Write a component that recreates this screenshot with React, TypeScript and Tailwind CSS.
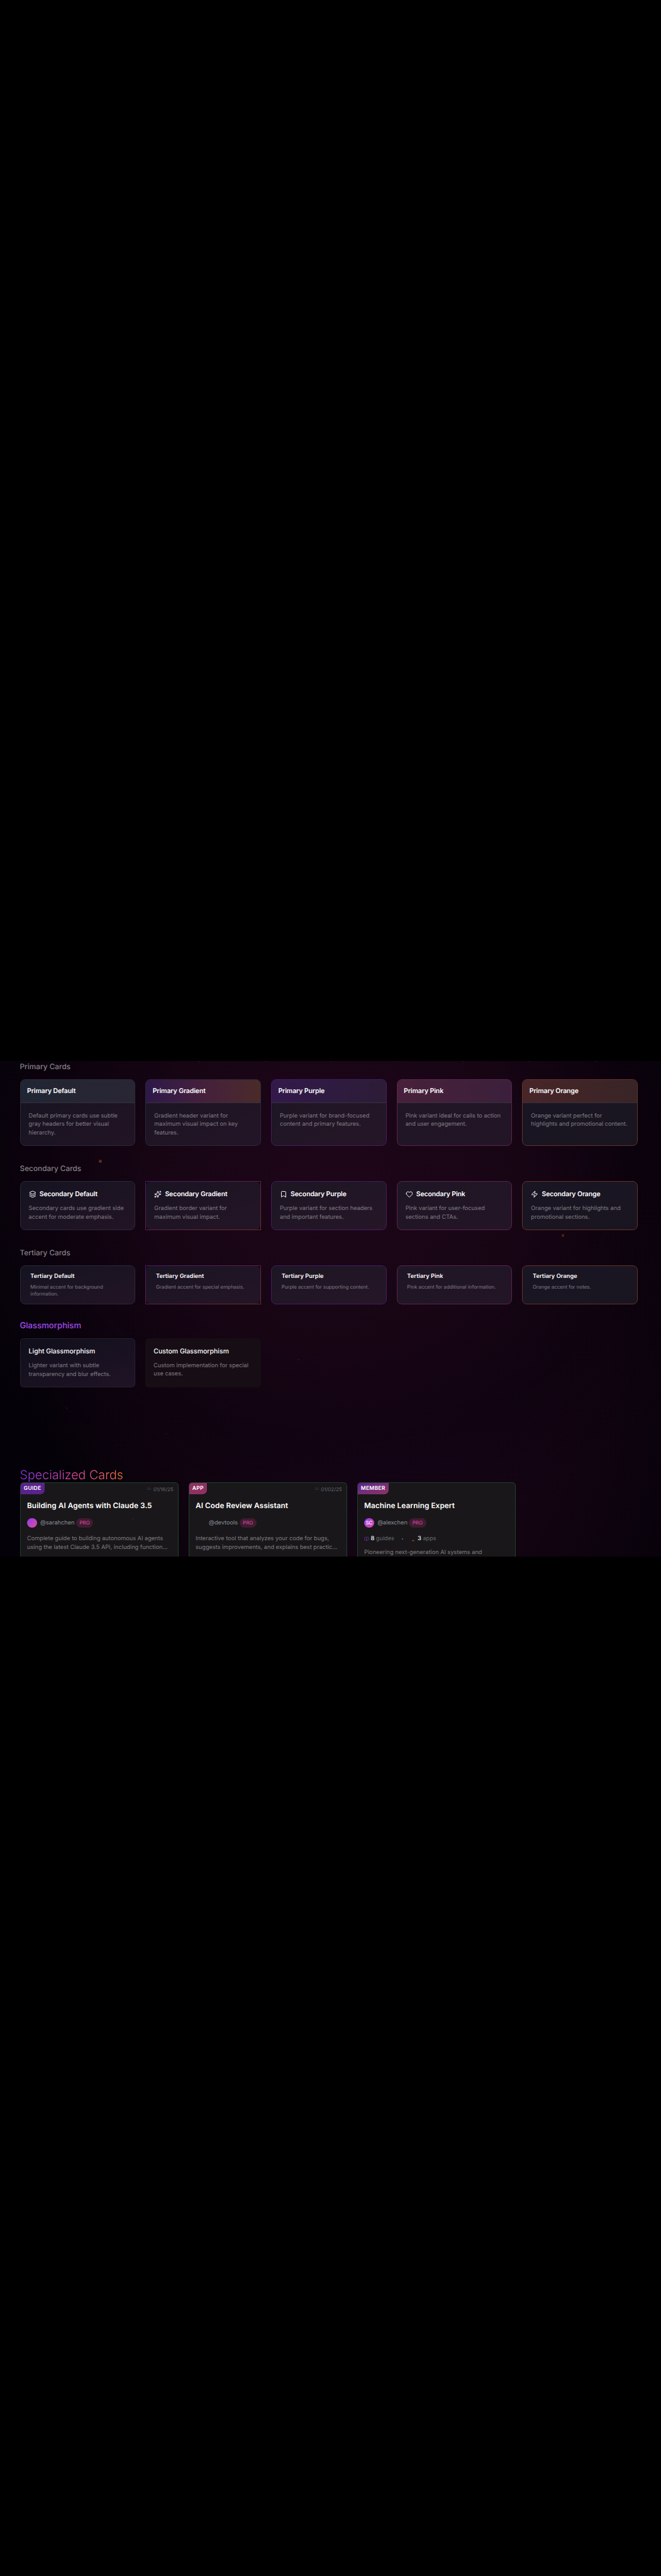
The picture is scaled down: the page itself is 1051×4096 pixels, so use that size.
import type { ReactNode } from "react";
import { Bookmark, BookOpen, Heart, Layers, Sparkles, Zap } from "lucide-react";

type Tone = "default" | "gradient" | "purple" | "pink" | "orange";

const tones: Tone[] = ["default", "gradient", "purple", "pink", "orange"];

const names: Record<Tone, string> = {
  default: "Default",
  gradient: "Gradient",
  purple: "Purple",
  pink: "Pink",
  orange: "Orange",
};

const borders: Record<Tone, string> = {
  default: "border-[#292938]",
  gradient: "border-[#292938]",
  purple: "border-[#451b66]",
  pink: "border-[#5c234e]",
  orange: "border-[#653228]",
};

const surfaces: Record<Tone, string> = {
  default: "bg-linear-to-br from-[#151320] to-[#221425]",
  gradient: "bg-linear-to-br from-[#1a1422] to-[#231527]",
  purple: "bg-linear-to-br from-[#1c1623] to-[#261627]",
  pink: "bg-linear-to-br from-[#1e1625] to-[#231526]",
  orange: "bg-linear-to-br from-[#1a1523] to-[#191520]",
};

const headers: Record<Tone, string> = {
  default: "bg-linear-to-r from-[#212533] to-[#292634]",
  gradient: "bg-linear-to-r from-[#2e1849] via-[#45203c] to-[#4b2a29]",
  purple: "bg-linear-to-r from-[#32194b] to-[#2c1c36]",
  pink: "bg-linear-to-r from-[#48203b] to-[#3b203b]",
  orange: "bg-linear-to-r from-[#482628] to-[#382426]",
};

const primaryText: Record<Tone, string> = {
  default: "Default primary cards use subtle gray headers for better visual hierarchy.",
  gradient: "Gradient header variant for maximum visual impact on key features.",
  purple: "Purple variant for brand-focused content and primary features.",
  pink: "Pink variant ideal for calls to action and user engagement.",
  orange: "Orange variant perfect for highlights and promotional content.",
};

const secondaryText: Record<Tone, string> = {
  default: "Secondary cards use gradient side accent for moderate emphasis.",
  gradient: "Gradient border variant for maximum visual impact.",
  purple: "Purple variant for section headers and important features.",
  pink: "Pink variant for user-focused sections and CTAs.",
  orange: "Orange variant for highlights and promotional sections.",
};

const tertiaryText: Record<Tone, string> = {
  default: "Minimal accent for background information.",
  gradient: "Gradient accent for special emphasis.",
  purple: "Purple accent for supporting content.",
  pink: "Pink accent for additional information.",
  orange: "Orange accent for notes.",
};

const icons = {
  default: Layers,
  gradient: Sparkles,
  purple: Bookmark,
  pink: Heart,
  orange: Zap,
};

const body = "text-[9.2px] leading-[13.8px] text-[#817d83]";

function Heading({ children }: { children: ReactNode }) {
  return <h3 className="h-[18.4px] text-[11.82px] font-medium leading-[18.4px] text-[#858186]">{children}</h3>;
}

function Row({ children, className }: { children: ReactNode; className: string }) {
  return <div className={`grid grid-cols-5 gap-[15.77px] ${className}`}>{children}</div>;
}

/** Card frame: a square gradient outline for the gradient tone, a rounded border otherwise. */
function Frame({ tone, children }: { tone: Tone; children: ReactNode }) {
  if (tone === "gradient") {
    return (
      <div className="bg-linear-to-br from-[#4a1a6c] via-[#5c2247] to-[#6a3324] p-px">
        <div className="h-full bg-[#12040f]">
          <div className={`h-full rounded-[7px] ${surfaces[tone]}`}>{children}</div>
        </div>
      </div>
    );
  }
  return <div className={`rounded-[7.9px] border ${borders[tone]} ${surfaces[tone]}`}>{children}</div>;
}

function Dot({ className }: { className: string }) {
  return <span className={`absolute rounded-full ${className}`} />;
}

function Shell({ tag, tagClass, date, title, children }: { tag: string; tagClass: string; date?: string; title: string; children: ReactNode }) {
  return (
    <article className="relative h-[140px] overflow-hidden rounded-t-[5.3px] border border-[#1b432b] bg-[#191719]">
      <div className="flex h-[17.6px] items-start justify-between">
        <span className={`flex h-[17.6px] items-center rounded-br-[7px] px-[5.3px] pt-[0.6px] text-[8.54px] font-semibold tracking-[0.23px] text-white ${tagClass}`}>
          {tag}
        </span>
        {date && (
          <span className="mr-[7.2px] flex h-[21px] items-center gap-[3.6px] text-[7.88px] text-[#646873]">
            <svg viewBox="0 0 9 6" className="mb-[4px] h-[4px] w-[6px] fill-[#3c3d46]">
              <rect x="1.4" y="0" width="1.6" height="1.6" />
              <rect x="5.4" y="0" width="1.6" height="1.6" />
              <rect x="0" y="3.6" width="9" height="1.5" />
            </svg>
            {date}
          </span>
        )}
      </div>
      <div className="px-[10.5px]">
        <h4 className="mt-[9.2px] h-[18.4px] text-[11.82px] font-semibold leading-[18.4px] tracking-[0.06px] text-white">{title}</h4>
        {children}
      </div>
    </article>
  );
}

function Author({ name, avatar }: { name: string; avatar: ReactNode }) {
  return (
    <div className="mt-[10.3px] flex h-[15.8px] items-center">
      {avatar}
      <span className="ml-[5.3px] text-[9.2px] text-[#8b909c]">{name}</span>
      <span className="ml-[2.6px] flex h-[14.4px] items-center rounded-full bg-[#3e1c31] px-[5.3px] text-[7.88px] font-medium tracking-[0.1px] text-[#d2459a]">
        PRO
      </span>
    </div>
  );
}

const avatarFill = "flex size-[15.8px] items-center justify-center rounded-full bg-linear-to-br from-[#9333ea] to-[#db46a0] text-[7.88px] font-medium text-white";

export default function App() {
  return (
    <main className="h-[4096px] w-[1051px] overflow-hidden bg-black pt-[1687px] font-['Inter',sans-serif] [text-rendering:geometricPrecision]">
      <div className="relative h-[788.3px] overflow-hidden bg-[radial-gradient(ellipse_62%_78%_at_51%_22%,#1d0618_0%,#170514_45%,#0f0310b0_72%,transparent_100%),radial-gradient(ellipse_52%_75%_at_59%_75%,#17051a_0%,#120411_50%,transparent_100%)] bg-[#040108] px-[31.5px]">
        <div className="w-[982.7px]">
          <Heading>Primary Cards</Heading>
          <Row className="mt-[10.5px] h-[106.4px]">
            {tones.map((t) => (
              <div key={t} className={`overflow-hidden rounded-[7.9px] border ${borders[t]} ${surfaces[t]}`}>
                <div className={`flex h-[37.5px] items-center border-b border-[#37303f] px-[10.5px] text-[10.51px] font-semibold tracking-[-0.12px] text-white ${headers[t]}`}>
                  Primary {names[t]}
                </div>
                <p className={`px-[13.1px] pt-[13.2px] ${body}`}>{primaryText[t]}</p>
              </div>
            ))}
          </Row>

          <div className="mt-[26.6px]">
            <Heading>Secondary Cards</Heading>
          </div>
          <Row className="mt-[10.5px] h-[78.7px]">
            {tones.map((t) => {
              const Icon = icons[t];
              return (
                <Frame key={t} tone={t}>
                  <div className="px-[13.1px] pt-[12.6px]">
                    <div className="flex h-[16px] items-center gap-[5.3px] text-[10.51px] font-semibold tracking-[-0.12px] text-white">
                      <Icon className="size-[11.8px]" strokeWidth={2} />
                      <span>Secondary {names[t]}</span>
                    </div>
                    <p className={`mt-[8.1px] ${body}`}>{secondaryText[t]}</p>
                  </div>
                </Frame>
              );
            })}
          </Row>

          <div className="mt-[26.3px]">
            <Heading>Tertiary Cards</Heading>
          </div>
          <Row className="mt-[10.5px] h-[62px]">
            {tones.map((t) => (
              <Frame key={t} tone={t}>
                <div className="px-[15.8px] pt-[9.9px]">
                  <div className="h-[13.8px] text-[9.2px] font-semibold leading-[13.8px] tracking-[0.07px] text-white">Tertiary {names[t]}</div>
                  <p className="mt-[4.7px] text-[7.88px] leading-[10.5px] text-[#817d83]">{tertiaryText[t]}</p>
                </div>
              </Frame>
            ))}
          </Row>

          <h3 className="mt-[25.3px] h-[18.4px] text-[13.14px] font-medium leading-[18.4px] text-[#a24bee]">Glassmorphism</h3>
          <Row className="mt-[10.2px] h-[78.5px]">
            <div className="rounded-[5.3px] border border-[#23222f] bg-linear-to-br from-[#100f1b] to-[#1f1326] px-[13.1px] pt-[12.6px]">
              <div className="h-[16px] text-[10.51px] font-medium leading-[16px] text-white">Light Glassmorphism</div>
              <p className={`mt-[8.1px] ${body}`}>Lighter variant with subtle transparency and blur effects.</p>
            </div>
            <div className="rounded-[5.3px] bg-[#170e15] px-[13.1px] pt-[13px]">
              <div className="h-[16px] text-[10.51px] font-medium leading-[16px] text-white">Custom Glassmorphism</div>
              <p className={`mt-[8.1px] ${body}`}>Custom implementation for special use cases.</p>
            </div>
          </Row>

          <h2 className="mt-[127.6px] h-[23.6px] w-[164px] whitespace-nowrap bg-linear-to-r from-[#8b30ea] via-[#d9469c] to-[#ef7430] bg-clip-text text-[19.7px] font-light leading-[23.6px] text-transparent">
            Specialized Cards
          </h2>
          <div className="grid w-[788.3px] grid-cols-3 gap-[15.77px]">
            <Shell tag="GUIDE" tagClass="bg-[#5a228c]" date="01/16/25" title="Building AI Agents with Claude 3.5">
              <Author name="@sarahchen" avatar={<span className={avatarFill} />} />
              <p className={`mt-[10.9px] ${body}`}>
                Complete guide to building autonomous AI agents
                <br />
                using the latest Claude 3.5 API, including function...
              </p>
            </Shell>
            <Shell tag="APP" tagClass="bg-[#8f3163]" date="01/02/25" title="AI Code Review Assistant">
              <Author name="@devtools" avatar={<span className="size-[15.8px]" />} />
              <p className={`mt-[10.9px] ${body}`}>
                Interactive tool that analyzes your code for bugs,
                <br />
                suggests improvements, and explains best practic...
              </p>
            </Shell>
            <Shell tag="MEMBER" tagClass="bg-linear-to-br from-[#5a228c] to-[#8f3163]" title="Machine Learning Expert">
              <Author name="@alexchen" avatar={<span className={avatarFill}>SC</span>} />
              <div className="mt-[10.5px] flex h-[13.8px] items-center text-[9.2px] text-[#666b76]">
                <BookOpen className="mt-[1px] h-[8px] w-[7.6px] text-[#7a38ad]" />
                <span className="ml-[2.8px] font-medium text-white">8</span>
                <span className="ml-[2.6px]">guides</span>
                <span className="ml-[11.6px] size-[2.7px] rounded-full bg-[#666b76]" />
                <svg viewBox="0 0 6 4" className="ml-[14px] mt-[5.5px] h-[2.6px] w-[4px] fill-[#8a452a]">
                  <path d="M3 0 4 1.6H5L6 4H0L1 1.6H2Z" />
                </svg>
                <span className="ml-[4.8px] font-medium text-white">3</span>
                <span className="ml-[2.6px]">apps</span>
              </div>
              <p className={`mt-[7.9px] ${body}`}>Pioneering next-generation AI systems and</p>
            </Shell>
          </div>
        </div>

        <Dot className="left-[315.5px] top-0 size-[2px] bg-[#31093f]" />
        <Dot className="left-[420.6px] top-0 size-[2px] bg-[#31093f]" />
        <Dot className="left-[525.7px] top-0 size-[2px] bg-[#31093f]" />
        <Dot className="left-[630.8px] top-0 size-[2px] bg-[#31093f]" />
        <Dot className="left-[735.9px] top-0 size-[2px] bg-[#31093f]" />
        <Dot className="left-[841px] top-0 size-[2px] bg-[#31093f]" />
        <Dot className="left-[946px] top-0 size-[2px] bg-[#31093f]" />
        <Dot className="left-[156.9px] top-[156.6px] size-[5.3px] bg-[#5d2a20]" />
        <Dot className="left-[893px] top-[275.4px] size-[4.4px] bg-[#4a2019]" />
        <Dot className="left-[683px] top-[354.5px] size-[3px] bg-[#3a1626]" />
        <Dot className="left-[473px] top-[473.5px] size-[2.6px] bg-[#2b1024]" />
        <Dot className="left-[105px] top-[551px] size-[2px] bg-[#2d0c4c]" />
        <Dot className="left-[262.5px] top-[591px] size-[3px] bg-[#1e0d16]" />
        <Dot className="left-[210px] top-[727px] size-[2.6px] bg-[#271a33]" />
      </div>
    </main>
  );
}
